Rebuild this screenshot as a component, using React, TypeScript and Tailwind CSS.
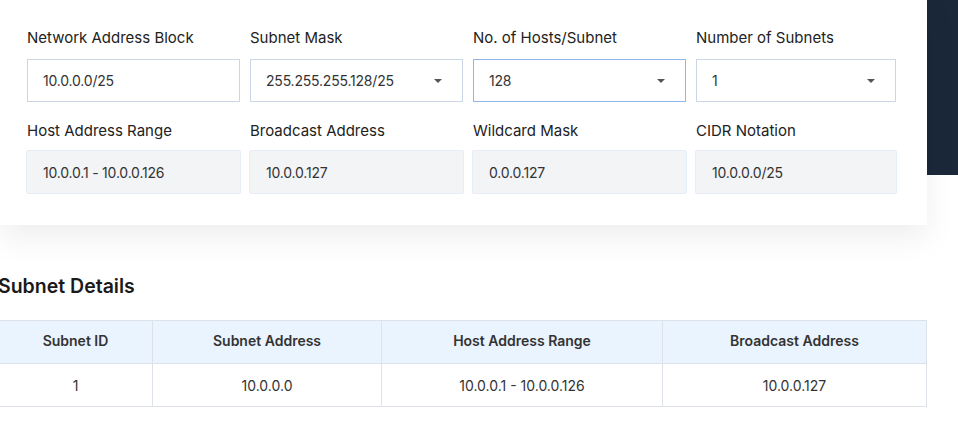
import React from "react";

interface field {
  label: string;
  value: string;
  select?: boolean;
  focus?: boolean;
  w: string;
}

const inputs: field[] = [
  { label: "Network Address Block", value: "10.0.0.0/25", w: "w-[213px]" },
  { label: "Subnet Mask", value: "255.255.255.128/25", select: true, w: "w-[213px]" },
  { label: "No. of Hosts/Subnet", value: "128", select: true, focus: true, w: "w-[213px]" },
  { label: "Number of Subnets", value: "1", select: true, w: "w-[200px]" },
];

const results: field[] = [
  { label: "Host Address Range", value: "10.0.0.1 - 10.0.0.126", w: "w-[215px]" },
  { label: "Broadcast Address", value: "10.0.0.127", w: "w-[215px]" },
  { label: "Wildcard Mask", value: "0.0.0.127", w: "w-[215px]" },
  { label: "CIDR Notation", value: "10.0.0.0/25", w: "w-[202px]" },
];

function Caret() {
  return (
    <svg width="8" height="4" viewBox="0 0 8 4" className="mr-[2px]">
      <path d="M0 0h8L4 4z" fill="#555" />
    </svg>
  );
}

export default function App() {
  return (
    <div className="w-[958px] h-[440px] bg-white overflow-hidden text-[#222] font-['Inter','Liberation_Sans',sans-serif]">
      <div className="flex items-start">
        <div className="w-[927px] h-[225px] bg-white shadow-[0_12px_30px_rgba(0,0,0,0.07)] pl-[27px] pt-[28px] relative z-10">
          <div className="flex gap-[10px]">
            {inputs.map((f) => (
              <div key={f.label} className={f.w}>
                <div className="text-[15px] leading-[20px] text-[#222]">{f.label}</div>
                <div
                  className={
                    "mt-[11px] h-[43px] flex items-center justify-between pl-[15px] pr-[18px] bg-white border text-[14px] tracking-[-0.2px] text-[#333] " +
                    (f.focus ? "border-[#8fb6ee]" : "border-[#cbd6e6]")
                  }
                >
                  <span>{f.value}</span>
                  {f.select ? <Caret /> : null}
                </div>
              </div>
            ))}
          </div>
          <div className="flex gap-[8px] mt-[19px] -ml-[1px]">
            {results.map((f) => (
              <div key={f.label} className={f.w}>
                <div className="text-[15px] leading-[20px] text-[#222] pl-[1px]">{f.label}</div>
                <div className="mt-[9px] h-[44px] flex items-center pl-[16px] bg-[#f2f4f6] border border-[#e4edf8] rounded-[2px] text-[14px] tracking-[-0.2px] text-[#333]">
                  {f.value}
                </div>
              </div>
            ))}
          </div>
        </div>
        <div className="w-[31px] h-[175px] bg-[#1b2839]"></div>
      </div>

      <div className="-ml-[2px] mt-[49px] w-[929px]">
        <h2 className="text-[19.5px] leading-[24px] font-semibold text-[#1a1a1a]">Subnet Details</h2>
        <table className="mt-[22px] w-full border-collapse text-[14px] text-[#333]">
          <thead>
            <tr className="bg-[#eaf4fe]">
              <th className="w-[154px] h-[43px] pb-[3px] border border-[#dde2e8] font-semibold">Subnet ID</th>
              <th className="w-[229px] pb-[3px] border border-[#dde2e8] font-semibold">Subnet Address</th>
              <th className="w-[281px] pb-[3px] border border-[#dde2e8] font-semibold">Host Address Range</th>
              <th className="pb-[3px] border border-[#dde2e8] font-semibold">Broadcast Address</th>
            </tr>
          </thead>
          <tbody>
            <tr>
              <td className="h-[43px] border border-[#dde2e8] text-center">1</td>
              <td className="border border-[#dde2e8] text-center">10.0.0.0</td>
              <td className="border border-[#dde2e8] text-center">10.0.0.1 - 10.0.0.126</td>
              <td className="border border-[#dde2e8] text-center">10.0.0.127</td>
            </tr>
          </tbody>
        </table>
      </div>
    </div>
  );
}
